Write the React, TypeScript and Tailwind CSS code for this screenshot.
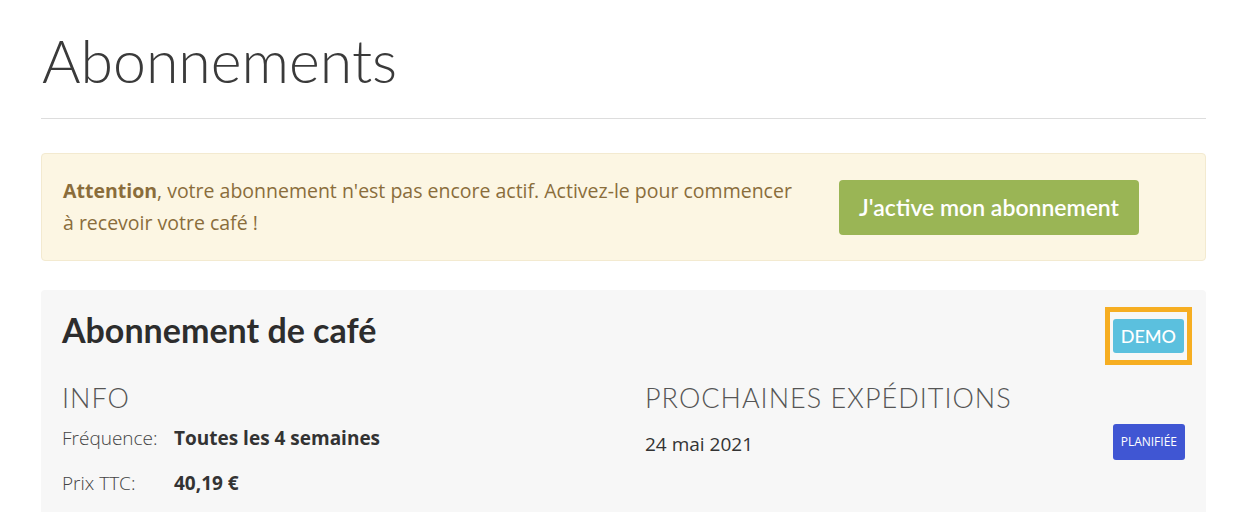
const heading = { fontFamily: "Lato, 'Noto Sans', sans-serif" };

function InfoRow({ label, value }: { label: string; value: string }) {
  return (
    <div className="flex items-baseline">
      <span className="w-[112px] font-light text-[#444]">{label}</span>
      <span className="font-bold text-[#333]">{value}</span>
    </div>
  );
}

export default function App() {
  return (
    <div
      className="min-h-[512px] bg-white pr-[46px] pl-[41px] text-[19px] text-[#333]"
      style={{ fontFamily: "'Open Sans', 'Noto Sans', sans-serif" }}
    >
      {/* Title */}
      <div className="border-b border-[#ddd] pt-[22px] pb-[18px]">
        <h1 style={heading} className="pl-[1px] text-[59px] font-light leading-[78px] text-[#3a3a3a]">
          Abonnements
        </h1>
      </div>

      {/* Alert */}
      <div className="mt-[34px] flex items-center rounded-[4px] border border-[#f3ead0] bg-[#fcf6e3] py-[21px] pr-[66px] pl-[21px]">
        <p className="w-[750px] text-[19.5px] leading-[32px] text-[#8a6d3b]">
          <strong className="font-bold">Attention</strong>, votre abonnement n'est pas encore actif. Activez-le pour
          commencer
          <br />à recevoir votre café !
        </p>
        <button
          style={heading}
          className="ml-auto h-[55px] rounded-[4px] bg-[#9ab555] px-[20px] text-[23px] font-semibold text-white"
        >
          J'active mon abonnement
        </button>
      </div>

      {/* Subscription card */}
      <div className="mt-[29px] rounded-t-[4px] bg-[#f7f7f7] px-[21px] pt-[17px] pb-[30px]">
        <div className="flex items-start justify-between">
          <h2 style={heading} className="pt-[3px] text-[34px] font-bold leading-[40px] text-[#2d2d2d]">
            Abonnement de café
          </h2>
          <span className="-mr-[7px] border-[5px] border-[#f6ae22] px-[3px] py-[7px]">
            <span
              style={heading}
              className="block rounded-[3px] bg-[#5bc0de] px-[8px] py-[5px] text-[18px] font-medium leading-[24px] text-white"
            >
              DEMO
            </span>
          </span>
        </div>

        <div className="mt-[16px] grid grid-cols-[583px_1fr]">
          <div>
            <h3 style={heading} className="text-[27px] font-light leading-[34px] tracking-[1px] text-[#555]">
              INFO
            </h3>
            <div className="mt-[9px] flex flex-col gap-[16px]">
              <InfoRow label="Fréquence:" value="Toutes les 4 semaines" />
              <InfoRow label="Prix TTC:" value="40,19 €" />
            </div>
          </div>
          <div>
            <h3 style={heading} className="text-[27px] font-light leading-[34px] tracking-[1px] text-[#555]">
              PROCHAINES EXPÉDITIONS
            </h3>
            <div className="mt-[9px] flex items-start justify-between">
              <span className="pt-[6px] text-[#333]">24 mai 2021</span>
              <span className="rounded-[3px] bg-[#4056d3] px-[8px] py-[10px] text-[12px] leading-[16px] text-white">
                PLANIFIÉE
              </span>
            </div>
          </div>
        </div>
      </div>
    </div>
  );
}
